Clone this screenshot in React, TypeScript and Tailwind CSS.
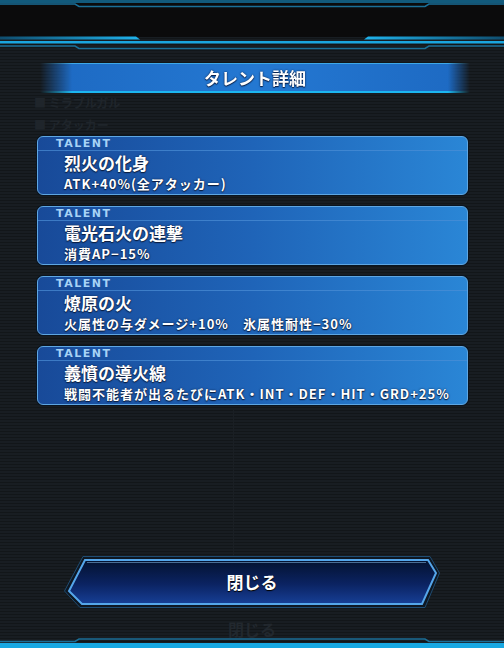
import React from 'react'

const TALENTS = [
  { title: '烈火の化身', desc: 'ATK+40%(全アタッカー)' },
  { title: '電光石火の連撃', desc: '消費AP−15%' },
  { title: '燎原の火', desc: '火属性の与ダメージ+10%　氷属性耐性−30%' },
  { title: '義憤の導火線', desc: '戦闘不能者が出るたびにATK・INT・DEF・HIT・GRD+25%' },
]

const JP = "font-['Noto_Sans_CJK_JP','Noto_Sans',sans-serif]"

// ─── Frame decorations ────────────────────────────────────────────────────────

function TopFrame() {
  return (
    <svg width="504" height="50" viewBox="0 0 504 50" className="block shrink-0">
      <defs>
        <linearGradient id="fadeL" x1="0" x2="1">
          <stop offset="0" stopColor="#0f4d6e" />
          <stop offset="1" stopColor="#1fb4ee" />
        </linearGradient>
        <linearGradient id="fadeR" x1="0" x2="1">
          <stop offset="0" stopColor="#1fb4ee" />
          <stop offset="1" stopColor="#0f4d6e" />
        </linearGradient>
      </defs>
      <rect x="0" y="0" width="504" height="37" fill="#0b0b0c" />
      <rect x="0" y="0" width="504" height="3" fill="#125a7c" />
      <path d="M0 4 H75 L79 6.5 H425 L429 4 H504" stroke="#1a6f98" strokeWidth="1.5" fill="none" />
      <path d="M0 36.5 H136 L140 39.5 H0 Z" fill="url(#fadeL)" />
      <path d="M504 36.5 H368 L364 39.5 H504 Z" fill="url(#fadeR)" />
      <rect x="0" y="41" width="504" height="2.5" fill="#1aa6df" />
      <path d="M0 46 H75 L79 48.5 H425 L429 46 H504" stroke="#1b6e96" strokeWidth="1.5" fill="none" />
    </svg>
  )
}

function BottomFrame() {
  return (
    <svg width="504" height="16" viewBox="0 0 504 16" className="relative block shrink-0">
      <path d="M0 9.5 H75 L79 7 H425 L429 9.5 H504" stroke="#1b6e96" strokeWidth="1.5" fill="none" />
      <rect x="0" y="11" width="504" height="5" fill="#18a8e2" />
    </svg>
  )
}

// ─── Talent card ──────────────────────────────────────────────────────────────

function TalentCard({ title, desc }: { title: string; desc: string }) {
  return (
    <div className="h-[59px] rounded-[6px] border border-[#5ea6e2] bg-[linear-gradient(90deg,#184a99_0%,#1f64b8_50%,#2a86d6_100%)] shadow-[0_0_0_1px_#0a1420] overflow-hidden">
      <div className="h-[14px] border-b border-[#4b8fd6]/70 pl-[18px] pt-[1px] text-[11px] leading-[12px] font-bold tracking-[1.5px] text-[#a6d3f6] font-['DejaVu_Sans',sans-serif]">
        TALENT
      </div>
      <div className={`pl-[26px] pt-[1px] text-white ${JP} [text-shadow:0_1px_1px_#0b1c3d,0_0_2px_#0b1c3d]`}>
        <div className="h-[21px] text-[17px] leading-[21px] font-bold">{title}</div>
        <div className="mt-[2px] h-[17px] text-[13px] leading-[17px] font-bold tracking-[1px]">{desc}</div>
      </div>
    </div>
  )
}

// ─── Close button ─────────────────────────────────────────────────────────────

function CloseButton() {
  return (
    <button className="relative ml-[64px] w-[376px] h-[52px] flex items-center justify-center">
      <svg width="376" height="52" viewBox="0 0 376 52" className="absolute inset-0">
        <defs>
          <linearGradient id="btnFill" x1="0" y1="0" x2="0" y2="1">
            <stop offset="0" stopColor="#04122f" />
            <stop offset="0.55" stopColor="#0b2362" />
            <stop offset="1" stopColor="#173f96" />
          </linearGradient>
        </defs>
        <polygon points="19,0.5 366,0.5 375.5,17 361,51.5 16,51.5 0.5,35" fill="#0e1722" stroke="#1f4c72" strokeWidth="1" />
        <polygon points="21,4 364,4 372,17 358,48 18,48 5,35" fill="url(#btnFill)" stroke="#55a6ea" strokeWidth="2" />
        <line x1="23" y1="6.5" x2="362" y2="6.5" stroke="#8fc8f5" strokeWidth="1" opacity="0.5" />
      </svg>
      <span className={`relative text-white text-[17px] font-bold ${JP} [text-shadow:0_1px_1px_#000]`}>閉じる</span>
    </button>
  )
}

// ─── Main ─────────────────────────────────────────────────────────────────────

export default function App() {
  return (
    <div className="relative w-[504px] h-[648px] overflow-hidden flex flex-col bg-[repeating-linear-gradient(180deg,#181d22_0px,#181d22_2px,#121619_2px,#121619_3px)]">
      <TopFrame />

      {/* faint page behind the dialog */}
      <div className={`absolute left-[34px] top-[92px] text-[12px] leading-[22px] font-bold text-[#1f252b] ${JP}`}>
        <div>■ ミラブルガル</div>
        <div>■ アタッカー</div>
      </div>
      <div className="absolute left-[233px] top-[410px] w-[1px] h-[150px] bg-[#1a1f24]" />

      <div className="relative mt-[13px] ml-[40px] w-[430px] h-[30px] bg-[linear-gradient(90deg,#1d69c2,#2478d2_50%,#1d69c2)] border-t border-t-[#3ea8e8] border-b-2 border-b-[#1cb6f0] [mask-image:linear-gradient(90deg,transparent_0px,black_32px,black_calc(100%-22px),transparent_100%)] flex items-center justify-center">
        <span className={`text-white text-[17px] font-bold ${JP} [text-shadow:0_0_2px_#0a1e46,0_1px_1px_#0a1e46]`}>タレント詳細</span>
      </div>

      <div className="relative mt-[43px] ml-[37px] w-[431px] flex flex-col gap-[11px]">
        {TALENTS.map((t) => (
          <TalentCard key={t.title} title={t.title} desc={t.desc} />
        ))}
      </div>

      <div className="mt-[151px]">
        <CloseButton />
      </div>

      <div className="flex-1 flex items-end justify-center -mb-[6px]">
        <span className={`text-[16px] leading-[18px] font-bold text-[#22282e] ${JP}`}>閉じる</span>
      </div>
      <BottomFrame />
    </div>
  )
}
